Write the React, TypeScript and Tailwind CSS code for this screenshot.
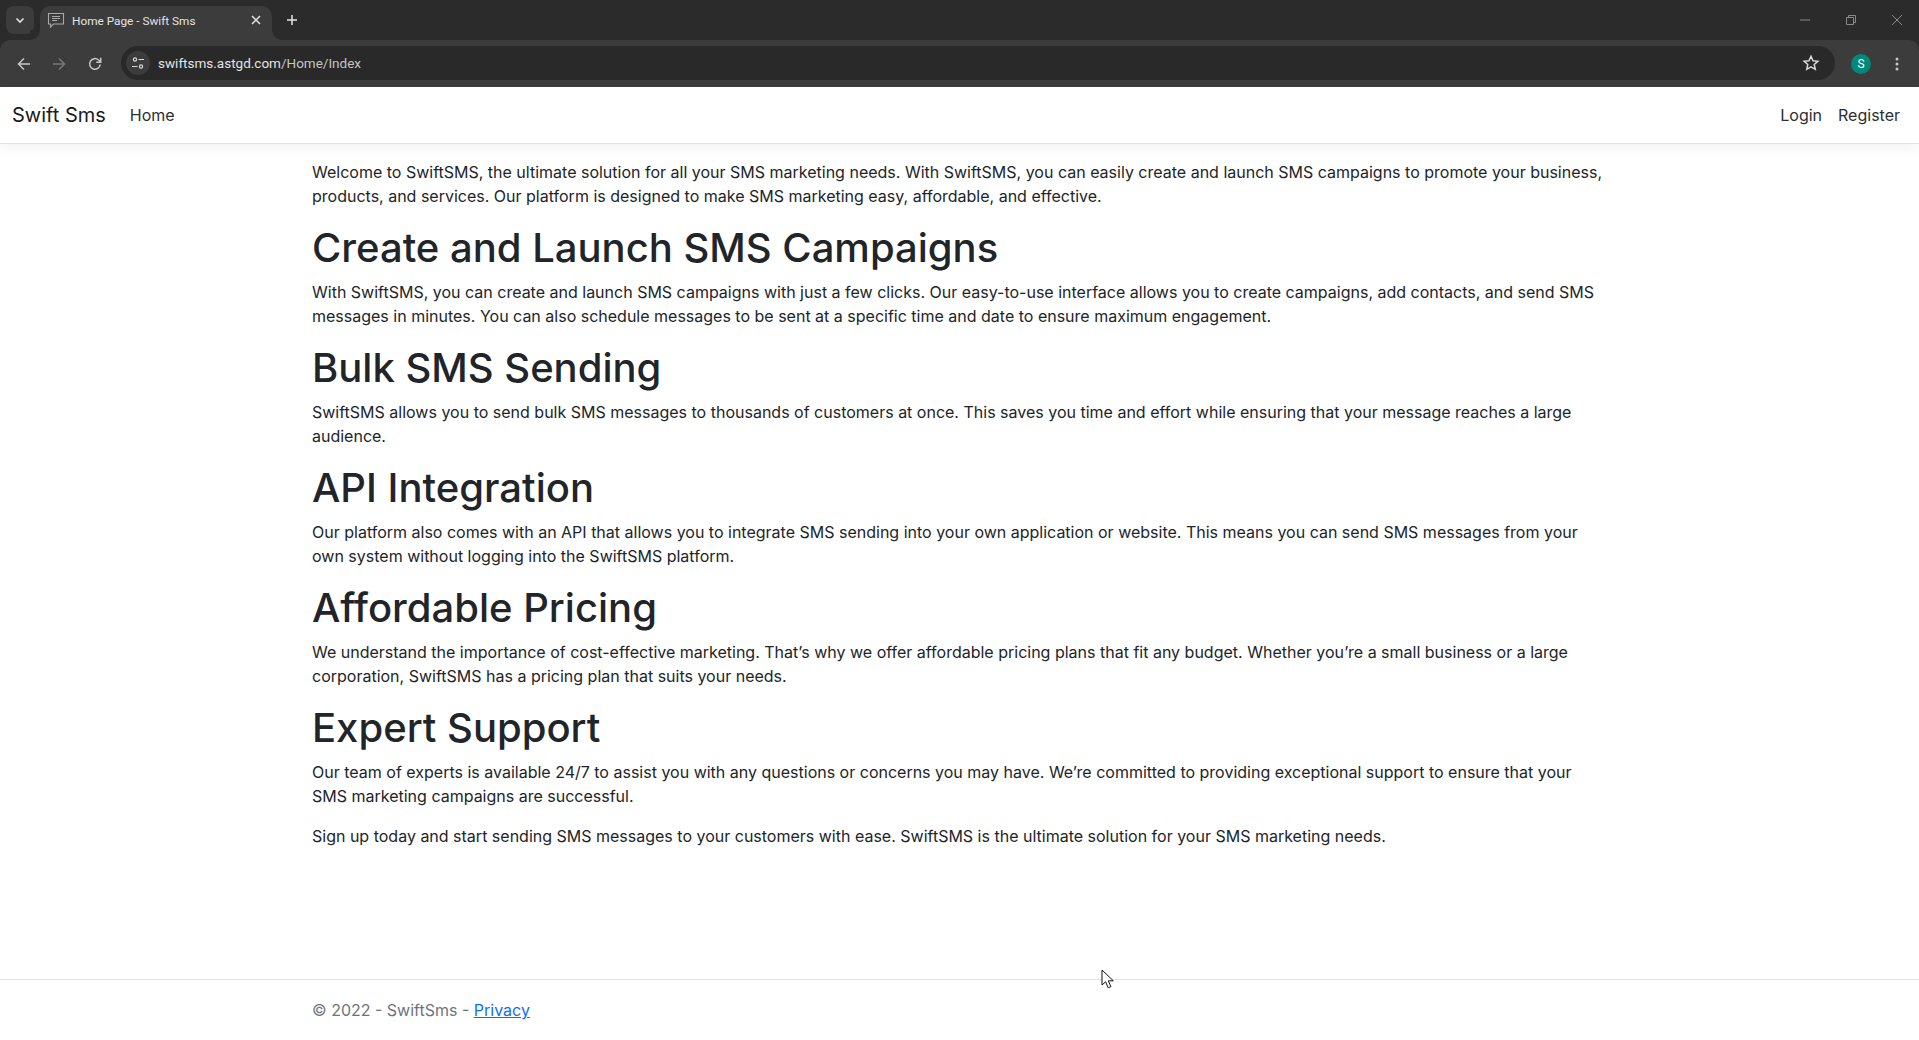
import React from "react";

const sections = [
  {
    h: "Create and Launch SMS Campaigns",
    p: "With SwiftSMS, you can create and launch SMS campaigns with just a few clicks. Our easy-to-use interface allows you to create campaigns, add contacts, and send SMS messages in minutes. You can also schedule messages to be sent at a specific time and date to ensure maximum engagement.",
  },
  {
    h: "Bulk SMS Sending",
    p: "SwiftSMS allows you to send bulk SMS messages to thousands of customers at once. This saves you time and effort while ensuring that your message reaches a large audience.",
  },
  {
    h: "API Integration",
    p: "Our platform also comes with an API that allows you to integrate SMS sending into your own application or website. This means you can send SMS messages from your own system without logging into the SwiftSMS platform.",
  },
  {
    h: "Affordable Pricing",
    p: "We understand the importance of cost-effective marketing. That’s why we offer affordable pricing plans that fit any budget. Whether you’re a small business or a large corporation, SwiftSMS has a pricing plan that suits your needs.",
  },
  {
    h: "Expert Support",
    p: "Our team of experts is available 24/7 to assist you with any questions or concerns you may have. We’re committed to providing exceptional support to ensure that your SMS marketing campaigns are successful.",
  },
];

function TabStrip() {
  return (
    <div className="flex h-[40px] items-end bg-[#2b2b2b] pl-[6px] font-['Roboto',sans-serif]">
      <div className="mb-[6px] flex h-[28px] w-[28px] items-center justify-center rounded-lg bg-[#3c3c3c]">
        <svg width="12" height="12" viewBox="0 0 12 12" fill="none" stroke="#e3e3e3" strokeWidth="1.6">
          <path d="M2.5 4.5 6 8l3.5-3.5" />
        </svg>
      </div>
      <div className="relative ml-[6px] flex h-[34px] w-[232px] items-center rounded-t-[10px] bg-[#3c3c3c] pb-[6px] pl-[7px] pr-[10px]">
        <svg width="18" height="18" viewBox="0 0 18 18" fill="none" stroke="#a8a8a8" strokeWidth="1.1">
          <path d="M1.5 2.5h15v10.5H6.5L3.5 16v-3h-2z" />
          <path d="M5 5.5h8M5 7.5h8M5 9.5h5" />
        </svg>
        <span className="ml-[7px] mt-[2px] flex-1 text-[11.8px] leading-[16px] text-[#e3e3e3]">Home Page - Swift Sms</span>
        <svg width="12" height="12" viewBox="0 0 12 12" fill="none" stroke="#e3e3e3" strokeWidth="1.5">
          <path d="M2 2l8 8M10 2l-8 8" />
        </svg>
        <div className="absolute -left-[10px] bottom-0 h-[10px] w-[10px] bg-[#3c3c3c]">
          <div className="h-full w-full rounded-br-[10px] bg-[#2b2b2b]" />
        </div>
        <div className="absolute -right-[10px] bottom-0 h-[10px] w-[10px] bg-[#3c3c3c]">
          <div className="h-full w-full rounded-bl-[10px] bg-[#2b2b2b]" />
        </div>
      </div>
      <div className="mb-[14px] ml-[14px] h-[12px] w-[12px]">
        <svg width="12" height="12" viewBox="0 0 12 12" fill="none" stroke="#e3e3e3" strokeWidth="1.5">
          <path d="M6 1v10M1 6h10" />
        </svg>
      </div>
      <div className="mb-[15px] ml-auto flex items-center gap-[36px] pr-[17px]">
        <svg width="10" height="10" viewBox="0 0 10 10" fill="none" stroke="#8a8a8a" strokeWidth="1">
          <path d="M0 5h10" />
        </svg>
        <svg width="10" height="10" viewBox="0 0 10 10" fill="none" stroke="#8a8a8a" strokeWidth="1">
          <path d="M.5 2.5h7v7h-7zM2.5 2.5v-2h7v7h-2" />
        </svg>
        <svg width="10" height="10" viewBox="0 0 10 10" fill="none" stroke="#8a8a8a" strokeWidth="1">
          <path d="M0 0l10 10M10 0L0 10" />
        </svg>
      </div>
    </div>
  );
}

function Toolbar() {
  return (
    <div className="bg-[#2b2b2b]">
      <div className="flex h-[47px] items-start rounded-t-[10px] bg-[#3c3c3c] font-['Roboto',sans-serif]">
        <div className="flex h-[47px] w-[121px] items-center pl-[16px]">
          <svg width="16" height="16" viewBox="0 0 16 16" fill="none" stroke="#c7c7c7" strokeWidth="1.5">
            <path d="M14 8H2.5M8 2.5 2.5 8 8 13.5" />
          </svg>
          <svg className="ml-[19px]" width="16" height="16" viewBox="0 0 16 16" fill="none" stroke="#777" strokeWidth="1.5">
            <path d="M2 8h11.5M8 2.5 13.5 8 8 13.5" />
          </svg>
          <svg className="ml-[20px]" width="16" height="16" viewBox="0 0 16 16" fill="none" stroke="#c7c7c7" strokeWidth="1.5">
            <path d="M13.2 8.5A5.3 5.3 0 1 1 11.7 4.2L13.5 6" />
            <path d="M13.7 1.8v4.4H9.3" />
          </svg>
        </div>
        <div className="mt-[6px] flex h-[34px] w-[1714px] items-center rounded-full bg-[#292929]">
          <div className="ml-[5px] flex h-[24px] w-[24px] items-center justify-center rounded-full bg-[#3c3c3c]">
            <svg width="14" height="14" viewBox="0 0 14 14" fill="none" stroke="#d8d8d8" strokeWidth="1.2">
              <circle cx="4" cy="3.5" r="1.6" />
              <path d="M7.5 3.5H13M1 10.5h5.5" />
              <circle cx="10" cy="10.5" r="1.6" />
            </svg>
          </div>
          <span className="ml-[8px] flex-1 text-[13.5px] text-[#e3e3e3]">
            swiftsms.astgd.com<span className="text-[#c4c4c4]">/Home/Index</span>
          </span>
          <svg className="mr-[15px]" width="18" height="18" viewBox="0 0 24 24" fill="none" stroke="#d8d8d8" strokeWidth="2">
            <path d="m12 3 2.7 6 6.5.7-4.9 4.3 1.4 6.5-5.7-3.3-5.7 3.3 1.4-6.5-4.9-4.3 6.5-.7z" />
          </svg>
        </div>
        <div className="flex h-[47px] flex-1 items-center pl-[16px]">
          <div className="flex h-[20px] w-[20px] items-center justify-center rounded-full bg-[#00897b] text-[12px] text-white">
            S
          </div>
          <svg className="ml-[24px]" width="4" height="14" viewBox="0 0 4 14" fill="#c7c7c7">
            <circle cx="2" cy="2" r="1.5" />
            <circle cx="2" cy="7" r="1.5" />
            <circle cx="2" cy="12" r="1.5" />
          </svg>
        </div>
      </div>
    </div>
  );
}

export default function App() {
  return (
    <div className="relative flex h-[1040px] flex-col overflow-hidden bg-white font-['Inter',sans-serif] text-[16px] leading-[24px] text-[#212529]">
      <TabStrip />
      <Toolbar />
      <nav className="mb-[16px] flex h-[57px] shrink-0 items-center border-b border-[#dee2e6] bg-white pl-[12px] pr-[11px] shadow-[0_4px_12px_rgba(0,0,0,0.05)]">
        <span className="mr-[16px] text-[20px] leading-[30px] text-[#1a1a1a]">Swift Sms</span>
        <a className="px-[8px] text-[#2b2f33]">Home</a>
        <div className="ml-auto flex">
          <a className="px-[8px] text-[#2b2f33]">Login</a>
          <a className="px-[8px] text-[#2b2f33]">Register</a>
        </div>
      </nav>
      <main className="ml-[300px] w-[1320px] flex-1 px-[12px]">
        <p className="mb-[16px]">
          Welcome to SwiftSMS, the ultimate solution for all your SMS marketing needs. With SwiftSMS, you can easily create and launch SMS campaigns to promote your business, products, and services. Our platform is designed to make SMS marketing easy, affordable, and effective.
        </p>
        {sections.map((s) => (
          <section key={s.h}>
            <h1 className="mb-[8px] text-[40px] font-medium leading-[48px]">{s.h}</h1>
            <p className="mb-[16px]">{s.p}</p>
          </section>
        ))}
        <p>
          Sign up today and start sending SMS messages to your customers with ease. SwiftSMS is the ultimate solution for your SMS marketing needs.
        </p>
      </main>
      <footer className="h-[61px] shrink-0 border-t border-[#dee2e6] leading-[60px] text-[#6c757d]">
        <div className="ml-[300px] w-[1320px] px-[12px]">
          © 2022 - SwiftSms - <a className="text-[#0d6efd] underline">Privacy</a>
        </div>
      </footer>
      <svg className="absolute left-[1101px] top-[969px]" width="15" height="21" viewBox="0 0 15 21" fill="#fff" stroke="#111" strokeWidth="1">
        <path d="M1 1v15l3.6-3.2 2.6 6 2.7-1.2-2.6-5.8h5z" />
      </svg>
    </div>
  );
}
